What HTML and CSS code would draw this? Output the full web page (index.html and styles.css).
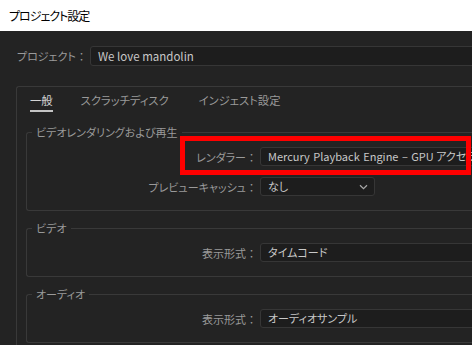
FILE: index.html
```html
<!DOCTYPE html>
<html lang="ja">
<head>
<meta charset="utf-8">
<link rel="stylesheet" href="styles.css">
</head>
<body>
<div class="page">
  <div class="titlebar">プロジェクト設定</div>
  <div class="content">
    <div class="project-row">
      <span class="plabel colon">プロジェクト</span>
      <div class="pinput">We love mandolin</div>
    </div>
    <div class="panel">
      <div class="tabs">
        <span class="tab active">一般</span>
        <span class="tab">スクラッチディスク</span>
        <span class="tab">インジェスト設定</span>
      </div>
      <fieldset class="group">
        <legend>ビデオレンダリングおよび再生</legend>
        <div class="row">
          <span class="label colon">レンダラー</span>
          <div class="select wide"><span class="latin">Mercury Playback Engine – GPU</span> アクセラレーション (CUDA)</div>
          <div class="mark"></div>
        </div>
        <div class="row">
          <span class="label colon">プレビューキャッシュ</span>
          <div class="select short"><span>なし</span>
            <svg class="chev" width="9" height="6" viewBox="0 0 9 6"><path d="M1 1.2 L4.5 4.6 L8 1.2" fill="none" stroke="#a8a8a8" stroke-width="1.2"/></svg>
          </div>
        </div>
      </fieldset>
      <fieldset class="group">
        <legend>ビデオ</legend>
        <div class="row">
          <span class="label colon">表示形式</span>
          <div class="select wide">タイムコード</div>
        </div>
      </fieldset>
      <fieldset class="group">
        <legend>オーディオ</legend>
        <div class="row">
          <span class="label colon">表示形式</span>
          <div class="select wide">オーディオサンプル</div>
        </div>
      </fieldset>
    </div>
  </div>
</div>
</body>
</html>
```

FILE: styles.css
```css
* { box-sizing: border-box; }
html, body { margin: 0; padding: 0; }
body {
  background: #232323;
  font-family: "Noto Sans CJK JP", "Noto Sans", sans-serif;
  font-feature-settings: "palt";
  font-size: 11px;
  color: #9a9a9a;
}
.page {
  width: 472px;
  height: 345px;
  overflow: hidden;
  background: #232323;
}
.titlebar {
  height: 31px;
  background: #ffffff;
  color: #000000;
  font-size: 12px;
  letter-spacing: -1px;
  line-height: 31px;
  padding-left: 9px;
}
.content {
  padding: 15px 0 0 16px;
}
.colon::after {
  content: "：";
  font-feature-settings: normal;
}
.project-row {
  display: flex;
  align-items: center;
  height: 20px;
}
.plabel {
  flex: none;
  width: 74px;
  padding-left: 1px;
  line-height: 16px;
  white-space: nowrap;
}
.pinput {
  flex: none;
  width: 420px;
  height: 20px;
  background: #1d1d1d;
  border: 1px solid #363636;
  border-radius: 3px;
  color: #c8c8c8;
  padding-left: 7px;
  line-height: 18px;
  font-size: 11.5px;
}
.panel {
  margin-top: 20px;
  width: 600px;
  border: 1px solid #393939;
  border-right: none;
  border-bottom: none;
  border-radius: 3px 0 0 0;
  padding: 5px 0 0 9px;
  height: 300px;
}
.tabs {
  display: flex;
  gap: 28px;
  padding-left: 4px;
  font-size: 11.3px;
}
.tab {
  line-height: 16px;
  padding-bottom: 2px;
  border-bottom: 2px solid transparent;
}
.tab.active {
  color: #d4d4d4;
  border-bottom-color: #c4c4c4;
}
.tab:last-child { margin-left: 2px; }
.group {
  margin: 12px 0 0 0;
  border: 1px solid #393939;
  border-right: none;
  border-radius: 3px 0 0 3px;
  padding: 7px 0 14px 0;
  display: flex;
  flex-direction: column;
  gap: 11px;
}
.group + .group { margin-top: 9px; }
.group legend {
  padding: 0 4px;
  margin-left: 5px;
  line-height: 16px;
  color: #9a9a9a;
}
.row {
  display: flex;
  align-items: center;
  gap: 3px;
  height: 19px;
  position: relative;
}
.label {
  flex: none;
  width: 230px;
  text-align: right;
  line-height: 16px;
  white-space: nowrap;
}
.select {
  flex: none;
  height: 19px;
  background: #1d1d1d;
  border: 1px solid #363636;
  border-radius: 3px;
  color: #c8c8c8;
  padding-left: 7px;
  line-height: 17px;
  white-space: nowrap;
  overflow: hidden;
}
.select.wide { width: 300px; }
.select.short {
  width: 115px;
  display: flex;
  align-items: center;
  justify-content: space-between;
  padding-right: 6px;
}
.latin { word-spacing: 1px; }
.chev { display: block; }
.mark {
  position: absolute;
  left: 153px;
  top: -11px;
  width: 291px;
  height: 39px;
  border: 5px solid #ff0000;
  pointer-events: none;
}
```
